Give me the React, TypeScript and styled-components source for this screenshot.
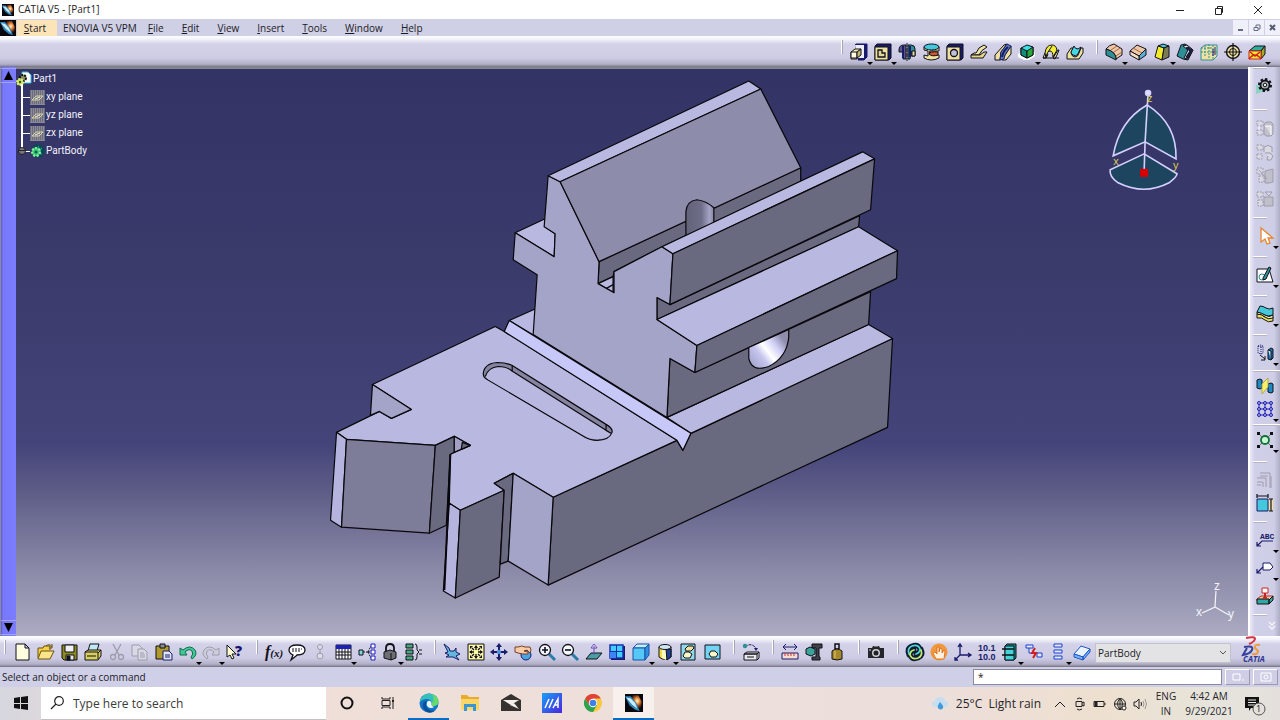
import React from "react";
import styled, { createGlobalStyle } from "styled-components";

const GlobalStyle = createGlobalStyle`
  *, *::before, *::after { box-sizing: border-box; }
  body { margin: 0; font-family: "Open Sans", "Noto Sans", sans-serif; color: #1c1c24; }
  button, input, select { font: inherit; color: inherit; margin: 0; }
  svg { display: block; }
`;

const App = styled.div`
  display: flex;
  flex-direction: column;
  height: 100vh;
  overflow: hidden;
  background: #cfcfe6;
`;

/* ---------- window chrome ---------- */

const TitleBar = styled.header`
  display: flex;
  align-items: center;
  height: 19px;
  flex: none;
  padding: 0 12px 0 2px;
  gap: 4px;
  background: #fff;
`;
const Title = styled.h1`
  flex: 1;
  margin: 0;
  font-size: 10px;
  font-weight: 400;
  line-height: 19px;
`;
const WindowButtons = styled.div`
  display: flex;
  gap: 18px;
`;
const WindowButton = styled.button`
  width: 21px;
  height: 18px;
  padding: 0;
  border: 0;
  background: none;
  display: grid;
  place-items: center;
`;
const MenuBar = styled.nav`
  display: flex;
  align-items: center;
  height: 17px;
  flex: none;
  background: #cfcfe6;
`;
const MenuItem = styled.button<{ $active?: boolean }>`
  height: 16px;
  padding: 0 9px;
  border: 0;
  background: ${(p) => (p.$active ? "#fde3b8" : "none")};
  font-size: 10px;
  line-height: 16px;
  white-space: nowrap;
`;
const MenuStart = styled(MenuItem)`
  width: 40px;
  padding: 0 8px 0 4px;
  margin-left: 1px;
`;
const MenuEnovia = styled(MenuItem)`
  padding: 0 2px 0 6px;
`;
const ChildButtons = styled.div`
  display: flex;
  gap: 1px;
  margin-left: auto;
`;
const ChildButton = styled.button`
  width: 15px;
  height: 15px;
  padding: 0;
  border: 0;
  background: #f0f0fa;
  display: grid;
  place-items: center;
`;

/* ---------- toolbars ---------- */

const ToolBar = styled.div<{ $end?: boolean }>`
  display: flex;
  align-items: stretch;
  justify-content: ${(p) => (p.$end ? "flex-end" : "flex-start")};
  height: 31px;
  flex: none;
  padding: 0 2px 0 4px;
  background: linear-gradient(#ffffff 0, #f4f4fc 3px, #d3d2e9 8px, #cdcce4 22px, #b2b1c8 28px, #8f8ea0 30px, #6a6a78 31px);
`;
const Section = styled.div<{ $width: number }>`
  position: relative;
  display: flex;
  align-items: center;
  justify-content: space-between;
  flex: none;
  width: ${(p) => p.$width}px;
  padding: 1px 12px 0 9px;
  &::before {
    content: "";
    position: absolute;
    left: 0;
    top: 4px;
    width: 2px;
    height: 14px;
    background: #fff;
    border-right: 1px solid #a5a4b8;
  }
`;
const Tool = styled.button`
  position: relative;
  width: 18px;
  height: 18px;
  flex: none;
  padding: 0;
  border: 0;
  background: none;
  svg { overflow: visible; }
`;
const Drop = styled.i`
  position: absolute;
  right: -5px;
  bottom: -4px;
  border: 3px solid transparent;
  border-top-color: #000;
  border-bottom: 0;
`;
const BodySelect = styled.select`
  width: 136px;
  height: 20px;
  margin: 7px 8px 0 -8px;
  padding: 0 0 0 2px;
  border: 1px solid #c2c2cc;
  border-radius: 0;
  background: #e3e3e6;
  font-size: 10px;
  appearance: none;
`;
const SelectWrap = styled.div`
  position: relative;
  svg { position: absolute; right: 12px; top: 14px; pointer-events: none; }
`;

const Main = styled.main`
  display: flex;
  flex: 1;
  min-height: 0;
`;
const ScrollStrip = styled.div`
  display: flex;
  flex-direction: column;
  justify-content: space-between;
  width: 16px;
  flex: none;
  padding: 1px 0;
  border-left: 1px solid #8b8ba0;
  background: linear-gradient(90deg, #5a5ac8, #7878fc 2px, #7c7cff);
`;
const ScrollButton = styled.button`
  width: 15px;
  height: 15px;
  padding: 0;
  border: 0;
  border-top: 1px solid #a2a2ff;
  border-bottom: 1px solid #a2a2ff;
  background: none;
  display: grid;
  place-items: center;
`;
const Viewport = styled.section`
  position: relative;
  flex: 1;
  border-top: 2px solid #85848f;
  background: linear-gradient(#333366 0, #3a3a6b 35%, #44447a 66%, #5c5b86 74%, #8685a4 87%, #acabc2 100%);
`;
const ModelLayer = styled.svg`
  position: absolute;
  inset: 0;
  width: 100%;
  height: 100%;
`;
const Tree = styled.ul`
  position: absolute;
  left: 0;
  top: 1px;
  margin: 0;
  padding: 0;
  list-style: none;
  color: #f2f2fa;
  font-family: Roboto, "Open Sans", sans-serif;
  font-size: 10px;
  line-height: 18px;
`;
const Branch = styled.ul`
  position: relative;
  margin: 0;
  padding: 0 0 0 14px;
  list-style: none;
  &::before {
    content: "";
    position: absolute;
    left: 5px;
    top: -4px;
    bottom: 9px;
    width: 2px;
    background: #fff;
  }
`;
const Node = styled.div`
  display: flex;
  align-items: center;
  height: 18px;
  gap: 1px;
`;
const Leaf = styled.li`
  position: relative;
  &::before {
    content: "";
    position: absolute;
    left: -8px;
    top: 9px;
    width: 8px;
    height: 1px;
    background: #fff;
  }
`;
const Expander = styled.button`
  position: absolute;
  left: -12px;
  top: 5px;
  width: 8px;
  height: 8px;
  padding: 0;
  border: 1px solid #222;
  border-radius: 50%;
  background: linear-gradient(#77777f 2px, #222 2px, #222 3px, #77777f 3px);
`;

const SideBar = styled.aside`
  display: flex;
  flex-direction: column;
  width: 32px;
  flex: none;
  border-left: 2px solid #fff;
  background: linear-gradient(90deg, #e9e9f8, #d0cfe8 5px, #cfcee7 24px, #aeadc6);
`;
const SideSection = styled.div<{ $height: number; $wide?: boolean }>`
  position: relative;
  display: flex;
  flex-direction: column;
  align-items: center;
  justify-content: space-between;
  flex: none;
  height: ${(p) => p.$height}px;
  padding: ${(p) => (p.$wide ? "7px 0 6px" : "10px 0 9px")};
  &::before {
    content: "";
    position: absolute;
    left: 3px;
    top: 0;
    width: ${(p) => (p.$wide ? 27 : 14)}px;
    height: 2px;
    background: #fff;
    border-bottom: 1px solid #b4b3c9;
  }
`;
const SideMore = styled(SideSection)`
  align-items: flex-end;
  padding: 2px 0 0;
`;

/* ---------- status line ---------- */

const StatusBar = styled.div`
  display: flex;
  align-items: center;
  height: 20px;
  flex: none;
  padding: 0 2px;
  background: #d0cfe8;
  font-size: 10px;
`;
const StatusText = styled.label`
  flex: 1;
`;
const PowerInput = styled.input`
  width: 249px;
  height: 16px;
  padding: 0 4px;
  border: 1px solid #8a8a9a;
  background: #fff;
  font-size: 10px;
`;
const StatusButton = styled.button`
  width: 25px;
  height: 16px;
  margin-left: 3px;
  padding: 0;
  border: 1px solid #9a99ae;
  border-top-color: #fff;
  border-left-color: #fff;
  background: #cfcee6;
  display: grid;
  place-items: center;
`;

/* ---------- taskbar ---------- */

const TaskBar = styled.footer`
  display: flex;
  align-items: stretch;
  height: 33px;
  flex: none;
  background: linear-gradient(90deg, #d6d6de 0, #dcd8dc 40px, #f0dfd9 330px, #eddfda 55%, #ecdedb 72%, #eee0cf 86%, #e6e4dc 95%, #e4dfdc 100%);
`;
const TaskButton = styled.button<{ $active?: boolean; $running?: boolean }>`
  width: 41px;
  padding: 0;
  border: 0;
  border-bottom: 2px solid ${(p) => (p.$running ? "#0a6cc4" : "transparent")};
  background: ${(p) => (p.$active ? "#f7f0ed" : "none")};
  display: grid;
  place-items: center;
`;
const SearchBox = styled.label`
  display: flex;
  align-items: center;
  gap: 9px;
  width: 285px;
  padding-left: 9px;
  border-bottom: 1px solid #c8c0c0;
  background: #fff;
`;
const SearchInput = styled.input`
  flex: 1;
  min-width: 0;
  padding: 0;
  border: 0;
  outline: 0;
  background: none;
  font-size: 12px;
  &::placeholder { color: #3b3b3b; opacity: 1; }
`;
const Tray = styled.div`
  display: flex;
  align-items: center;
  margin-left: auto;
  color: #26262b;
`;
const Weather = styled.button`
  display: flex;
  align-items: center;
  gap: 8px;
  padding: 0;
  margin-right: 9px;
  border: 0;
  background: none;
  font-size: 12px;
  white-space: pre;
`;
const TrayIcon = styled.button`
  width: 20px;
  height: 20px;
  padding: 0;
  border: 0;
  background: none;
  display: grid;
  place-items: center;
`;
const TrayText = styled.div<{ $width: number }>`
  width: ${(p) => p.$width}px;
  font-size: 10px;
  line-height: 15px;
  text-align: center;
  white-space: nowrap;
`;
const Notice = styled(TrayIcon)`
  width: 36px;
  margin-right: 8px;
`;

/* ---------- icons, drawn on an 18 unit grid ---------- */

const K = "#111118";
const N = "#1a1a6a";
const T = "#2f8f96";
const Y = "#efe2a0";
const G = "#9c9cab";

const icons: Record<string, React.ReactNode> = {
  pad: <g><path d="M5 2l1-1h11v13l-3 3H8" fill={N} stroke={N} /><path d="M5 2h9v13H8z" fill="#eeeef6" /><path d="M1 9l4-3h6l-4 3v7H1z" fill="#f7eeb4" stroke={K} /><path d="M1 9h6v6H1z" fill="#fffbe0" stroke={K} /><path d="M7 9l4-3v6l-4 3z" fill="#c7b870" stroke={K} /></g>,
  pocket: <g><path d="M1 3l2-2h14v14l-2 2H1z" fill={N} stroke={K} /><path d="M1 4h13v13H1z" fill={Y} stroke={K} /><path d="M4 7h4v3h3v4H4z" fill="#e0d69a" stroke={K} strokeWidth="1.3" /></g>,
  shaft: <g><path d="M1 7q0-5 5-5h2v14H5V9H1z" fill="#5a568c" stroke={K} /><path d="M10 2h3q4 0 4 4v7h-4V8l-1 8h-2z" fill={T} stroke={K} /><path d="M14 8h3v5h-3z" fill={Y} stroke={K} /><path d="M9 0v18" stroke={K} strokeDasharray="4 1" /><path d="M5 3v12M12 3v11" stroke={N} strokeWidth="2" /></g>,
  groove: <g stroke={K}><path d="M2 4v3l4 1v5l-4-1v3q7 4 15 0v-3H9q-3-2-1-4h9V4z" fill={Y} /><path d="M7 11q1-3 9-2v3q-6 2-9-1z" fill="#d4572e" /><ellipse cx="9.500" cy="4" rx="7.500" ry="3" fill="#45c7dc" /></g>,
  hole: <g><path d="M1 3l2-2h14v14l-2 2H1z" fill={N} stroke={K} /><path d="M1 4h13v13H1z" fill={Y} stroke={K} /><circle cx="8" cy="10" r="3.500" fill="#c2c0dc" stroke={K} strokeWidth="1.300" /></g>,
  rib: <g stroke={K}><path d="M1 12l3-2h2q2-6 8-8l3 2q-6 3-8 8H6z" fill={Y} /><path d="M1 12h9l4-3h3l-4 6H1z" fill="#e3d488" /></g>,
  slot: <g><path d="M1 12L10 2l3-1-6 8-1 8H1z" fill={Y} stroke={K} /><path d="M11 12l6-9v8l-5 6H8z" fill={Y} stroke={K} /><path d="M7 9l6-8 4 2-6 9-1 4-4 1z" fill="#5c7fb0" stroke={N} /><path d="M8 14q1-6 6-10" stroke={N} fill="none" strokeWidth="2" /></g>,
  stiffener: <g><path d="M0 11l4-3 9 3 4-2v4l-6 4H6l-6-3z" fill="#fff" /><path d="M3 5l6-3 6 2v8l-6 3-6-3z" fill="#3adfe4" stroke={K} /><path d="M3 5l6 3v7l-6-3z" fill="#0d8f7a" stroke={K} /><path d="M9 8l6-4v8l-6 3z" fill="#29a83c" stroke={K} /></g>,
  multi: <g stroke={K}><path d="M1 15l2-5 3 1q-1 3-2 4zM11 15l5-8h1l-2 5-2 4z" fill={Y} /><path d="M3 10q1-8 7-8 4 0 5 5l-4 7q0-6-3-6T4 15z" fill="#f4ee38" /><path d="M1 15h16M6 9l4-6" fill="none" /></g>,
  removed: <g stroke={K}><path d="M1 16v-5l4-6h2l-2 5q1 4 4 4t4-4l2-5h2v5l-4 6z" fill={Y} /><path d="M5 9l3-6q1 3 4 3l3-2-3 7q-2 3-5 1-2-1-2-3z" fill="#45d7e4" /></g>,
  fillet: <g stroke={K}><path d="M1 6q3-4 8-5l8 5v6l-6 4Q11 9 1 6z" fill="#efc7a6" /><path d="M1 6v6l10 5Q12 9 1 6z" fill={T} /><path d="M11 13l6-4M9 9l6-4M6 7l6-4" fill="none" stroke="#9a6a48" /></g>,
  chamfer: <g stroke={K}><path d="M1 8l7-6 9 4-7 7z" fill="#efc7a6" /><path d="M10 13l7-7v6l-7 5z" fill="#5ab0d8" /><path d="M1 8l9 5v4l-9-5z" fill="#f6dcc4" /><path d="M4 5l9 5" stroke="#9a6a48" /></g>,
  draft: <g stroke={K}><path d="M5 3l5-2 6 2-5 2z" fill="#45c7dc" /><path d="M5 3l6 2-2 12-7-3z" fill="#f2ea29" /><path d="M11 5l5-2v11l-7 3z" fill="#7c7b54" /></g>,
  shell: <g stroke={K}><path d="M1 13L5 2l4-1 8 6-5 10-5-1z" fill={T} /><path d="M7 3l5 4-4 8 4 1 5-9-6-5z" fill="#dfe6f2" /><path d="M10 5l4 3-4 6 2 1 4-8-4-3z" fill={N} /></g>,
  thick: <g stroke={T}><path d="M1 5l4-3h12v11l-4 4H1z" fill={Y} /><path d="M5 2v11M9 1v14M13 2v15M1 9h16M1 5h12" strokeDasharray="2 1" /><path d="M13 6v7M15 4v8" stroke={N} /></g>,
  thread: <g stroke={K} fill="none"><circle cx="9" cy="9" r="6.500" fill={Y} strokeWidth="1.400" /><circle cx="9" cy="9" r="3.500" /><path d="M9 0v18M0 9h18" strokeWidth="1.200" /></g>,
  replace: <g stroke={K}><path d="M1 8l6-5h10l-4 5z" fill="#2fae9a" /><path d="M13 8l4-5v8l-4 5z" fill="#a9a52a" /><path d="M1 8h12v8H1z" fill="#f2ea29" stroke="#c22" /><path d="M1 16q6-8 12 0M2 9l5 4 5-4" stroke="#d41f1f" strokeWidth="1.500" fill="none" /></g>,

  gear: <g><path d="M0 8v9l12-4 5-4z" fill="#8fd1c2" /><circle cx="9" cy="8" r="6" fill="none" stroke={K} strokeWidth="2" strokeDasharray="2.400 2.200" /><circle cx="9" cy="8" r="4.500" fill="#b5b5bc" stroke={K} strokeWidth="1.800" /><circle cx="9" cy="8" r="1.800" fill="#e5e5ec" stroke={K} /></g>,
  bool1: <g stroke={G} fill="#d9d9e4"><path d="M1 2h6v5H1zM1 11h6v5H1z" strokeDasharray="2 1" /><path d="M8 5l2-2h5l2 2v10l-2 2h-5l-2-2z" fill="#c0c0ca" /><path d="M9 7h6v9M3 7v4" stroke="#fff" /></g>,
  bool2: <g stroke={G} fill="#d9d9e4"><path d="M1 2h6v5H1zM1 11h5v5H1z" strokeDasharray="2 1" /><path d="M8 9V4q4-3 8 0v5M9 10l5 0 3 3-2 4h-4l1-4" /></g>,
  bool3: <g stroke={G} fill="#d9d9e4"><path d="M1 2h6v6H1zM3 10h5v6H3z" strokeDasharray="2 1" /><path d="M9 5l8-2v13l-4 1H9z" fill="#c0c0ca" /><path d="M3 4l8 9" /></g>,
  bool4: <g stroke={G} fill="#d9d9e4"><path d="M1 2h6v5H1zM2 10h5v6H2z" strokeDasharray="2 1" /><path d="M8 7h9v9H8z" fill="#c0c0ca" /><path d="M9 2h7l-3 4z" /></g>,
  arrow: <path d="M5 1v14l4-3 2 5 3-1-2-5h5z" fill="#fff" stroke="#e8872e" strokeWidth="1.300" />,
  sketch: <g><path d="M1 3h12l4 13H1z" fill="#fff" stroke={K} /><circle cx="6" cy="11" r="3" fill="none" stroke={T} /><path d="M7 12l6-11 2 1-5 11-3 1z" fill={T} stroke={K} /></g>,
  surface: <g stroke={K}><path d="M1 9q5 0 8 3t8 0v4q-5 2-8-1t-8-2z" fill="#efe05a" /><path d="M1 7q4 0 8 3t8 0v3q-5 2-8-1T1 9z" fill="#fbf5b8" /><path d="M1 7l3-6q3 0 6 2t7 0v7q-5 2-8 0T1 7z" fill="#45c7dc" /></g>,
  transform: <g><path d="M2 2l3-1 2 1v7l-2 1-3-1zM2 2l3 1 2-1M5 3v7" fill="none" stroke={N} strokeDasharray="1 1" /><path d="M12 6l3-2 2 1v9l-2 2-3-1z" fill="#1c71b8" stroke={K} /><path d="M12 6l3 1v8" fill="#bfe6f5" stroke={K} /><path d="M4 11l5 4M9 12v4H5" fill="none" stroke={K} /></g>,
  mirror: <g stroke={K}><path d="M1 3l3-1 2 1v8l-2 1-3-1zM12 7l3-1 2 1v8l-2 1-3-1z" fill="#1d8ac4" /><path d="M6 7l6-6v9l-6 7z" fill="#f7f06a" stroke="#b0a64a" /></g>,
  pattern: <g stroke="#1d1db0" fill="#a9a9f5"><path d="M3 3h12v12H3zM9 3v12M3 9h12" fill="none" />{[3, 9, 15].map((x) => [3, 9, 15].map((y) => <circle key={`${x}-${y}`} cx={x} cy={y} r="1.500" />))}</g>,
  scale: <g stroke={K}><path d="M3 3l3 3M15 3l-3 3M3 15l3-3M15 15l-3-3" stroke="#777" /><path d="M1 1h3v3H1zM14 1h3v3h-3zM1 14h3v3H1zM14 14h3v3h-3z" fill={K} stroke="none" /><circle cx="9" cy="9" r="4" fill="#c8f9d2" stroke="#12713b" strokeWidth="1.800" /></g>,
  dimOff: <g stroke={G} fill="none"><path d="M1 7h9v9M1 11h6v5M1 14h4M4 2h10v15M4 5h8M15 5v12" /></g>,
  dim: <g><path d="M1 5h11v12H1z" fill="#45c7dc" stroke={N} /><path d="M13 5h4v12h-4z" fill={Y} /><path d="M1 2h11M1 0v4M12 0v4M15 5v12M13 5h4M13 17h4" stroke={K} strokeWidth="1.200" /></g>,
  abc: <g><text x="4" y="8" fontSize="8" fontWeight="700" fontFamily="Liberation Mono, monospace" fill={N}>ABC</text><path d="M17 10H6l-5 5M1 11v4h4" fill="none" stroke={N} strokeWidth="1.200" /></g>,
  tag: <g stroke={N} fill="none"><path d="M7 4h7l3 4-3 3H7z" fill="#fff" /><path d="M7 8l-6 6M1 10v4h4" strokeWidth="1.200" /></g>,
  stamp: <g><path d="M1 12l4-3h12l-4 5H1z" fill="#f0c89c" stroke="#c92222" /><path d="M1 12h12v5H1zM13 13l4-4v4l-4 4z" fill="#2fa7a3" stroke={K} /><path d="M6 1h6v5H6z" fill="#fff" stroke="#c92222" /><path d="M9 6v4M7 11h4" stroke="#c92222" strokeWidth="2" /></g>,
  more: <path d="M7 6l3 3 3-3M7 10l3 3 3-3" fill="none" stroke="#f5f5fb" strokeWidth="1.300" />,

  newDoc: <path d="M3 1h9l4 4v12H3zM12 1v4h4" fill="#fffde0" stroke={K} />,
  open: <g stroke="#6a5208"><path d="M1 15V5h5l1-2h6v4" fill="#f4d04b" /><path d="M1 16L4 8h13l-4 8z" fill="#fbe58a" /><path d="M9 3q4-3 6 1M15 1v4h-3" fill="none" /></g>,
  save: <g stroke={K}><path d="M2 2h15v15H4l-2-2z" fill="#8e8c1c" /><path d="M5 2h9v7H5z" fill="#eef0f4" /><path d="M6 12h8v5H6z" fill="#e9e9f2" /><path d="M7 13h3v4H7z" fill={K} /></g>,
  print: <g stroke={K}><path d="M6 1h9l-2 7H4z" fill="#bfe9f5" /><path d="M1 9l3-2h13v6l-3 4H1z" fill="#d9cf5e" /><path d="M1 9h13v7M14 10l3-3M3 13h9" fill="none" /></g>,
  cut: <g stroke={G} fill="none" strokeWidth="1.300"><path d="M5 1l6 11M13 1L7 12" /><circle cx="5" cy="14" r="2.500" /><circle cx="13" cy="14" r="2.500" /></g>,
  copy: <g stroke={G} fill="#d9d9e6"><path d="M1 2h7l3 3v8H1z" /><path d="M7 6h6l3 3v8H7zM9 10h4M9 12h5M9 14h5" /></g>,
  paste: <g stroke={K}><path d="M1 3h13v13H1z" fill="#b09a2c" /><path d="M5 1h5v4H5z" fill="#8d8d96" /><path d="M8 8h6l3 3v6H8z" fill="#dfe7fa" stroke={N} /><path d="M10 12h5M10 14h5" stroke={N} /></g>,
  undo: <path d="M1 5v7h7l-2-3q4-4 7-1 2 3-1 6l1 2q6-4 3-9Q11 1 4 7z" fill="#3fc997" stroke="#0f6b4a" />,
  redo: <path d="M17 5v7h-7l2-3q-4-4-7-1-2 3 1 6l-1 2Q-1 12 2 7q5-6 12 0z" fill="#cfcfdc" stroke={G} />,
  help: <g><path d="M1 2v12l3-2 2 4 2-1-2-4h4z" fill="#fffbd0" stroke={K} /><text x="9" y="13" fontSize="14" fontWeight="800" fill="#14146e">?</text></g>,
  fx: <text x="0" y="14" fontSize="16" fontStyle="italic" fontWeight="700" fontFamily="Liberation Serif, serif" fill={K}>f<tspan fontSize="11">(x)</tspan></text>,
  comment: <g><path d="M9 2q8 0 8 5t-8 5l-1 1-5 4 2-5Q1 10 1 7q0-5 8-5z" fill="#fff" stroke={K} strokeWidth="1.300" /><path d="M4 6h10M4 8h9" stroke={K} strokeDasharray="2 1" /></g>,
  chain: <g stroke={G} fill="#dcdce8"><circle cx="9" cy="4" r="2.500" /><circle cx="9" cy="13" r="3" /><path d="M9 6v5" /></g>,
  table: <g><path d="M2 2h15v14H2z" fill="#fff" stroke={K} /><path d="M2 2h15v4H2z" fill="#1c22b4" /><path d="M2 9h15M2 12h15M5 6v10M8 6v10M11 6v10M14 6v10" stroke={K} /></g>,
  graph: <g stroke="#1d1dc0" fill="#fff"><path d="M5 9h5M10 9l3-6M10 9l3 6M10 9h4" stroke={K} strokeDasharray="2 1" /><path d="M1 7h4v5H1z" fill="#7fd6e0" stroke={K} /><path d="M13 1h4v4h-4zM13 7h4v4h-4zM13 13h4v4h-4z" /></g>,
  lock: <g stroke={K}><path d="M5 9V5q0-4 4-4t4 4v3" fill="none" strokeWidth="1.800" /><path d="M3 9l6-2 6 2v6l-5 2-7-2z" fill="#6d6d72" /><path d="M10 10v7" /></g>,
  rules: <g><path d="M2 1h7v4H2zM2 7h7v4H2zM2 13h7v4H2z" fill="#46a87c" stroke={K} /><path d="M11 1q2 0 2 3v3l2 2-2 2v3q0 3-2 3M15 7h3M15 11h3" fill="none" stroke={K} /></g>,
  fly: <path d="M1 1l5 4 1 3 4 0 2-3v4l4 2-4 2 3 4-6-3H3l3-2-4-2 3-1z" fill="#62b7dc" stroke={N} />,
  fit: <g><path d="M1 1h16v16H1z" fill="#fbf7a8" stroke={K} /><path d="M9 3v4M9 11v4M3 9h4M11 9h4M5 5l2 2M13 5l-2 2M5 13l2-2M13 13l-2-2" stroke={K} strokeWidth="1.300" /><path d="M9 2L7 5h4zM9 16l-2-3h4zM2 9l3-2v4zM16 9l-3-2v4zM3 3h3L3 6zM15 3h-3l3 3zM3 15h3l-3-3zM15 15h-3l3-3z" fill={K} /></g>,
  pan: <g><path d="M9 2v14M2 9h14" stroke={N} strokeWidth="2" /><path d="M9 0L6 4h6zM9 18l-3-4h6zM0 9l4-3v6zM18 9l-4-3v6z" fill={N} /><circle cx="9" cy="9" r="2.200" fill="#4b8fe0" /></g>,
  rotate: <g stroke={K}><circle cx="12" cy="12" r="5" fill="#4aa5e6" stroke={N} /><path d="M1 4h3q4-2 7 0l5 0 1 3-1 3-3-3-3 1 4 1 0 2-5 0-5-1-3-1z" fill="#f6cda6" stroke="#7a3d24" /></g>,
  zoomIn: <g><path d="M11 11l6 6" stroke="#2c7aa8" strokeWidth="3" /><circle cx="7" cy="7" r="5.500" fill="#f3f8fc" stroke={K} strokeWidth="1.300" /><path d="M4 7h6M7 4v6" stroke={K} strokeWidth="1.600" /></g>,
  zoomOut: <g><path d="M11 11l6 6" stroke="#2c7aa8" strokeWidth="3" /><circle cx="7" cy="7" r="5.500" fill="#f3f8fc" stroke={K} strokeWidth="1.300" /><path d="M4 7h6" stroke={K} strokeWidth="1.600" /></g>,
  normal: <g><path d="M1 16l5-6h11l-5 6z" fill="#4a9fa5" stroke={K} /><path d="M9 12V3M6 5l3-4 3 4z" stroke="#6a4bb8" fill="#fff" /></g>,
  multiView: <g><path d="M3 3h14v14H3z" fill={N} /><path d="M2 2h13v13H2z" fill="#3fd0fa" stroke="#1a2fb0" strokeWidth="1.500" /><path d="M2 9h6v6H2z" fill="#3d84f4" /><path d="M8.500 2v13M2 8.500h13" stroke="#1a2fb0" /></g>,
  iso: <g stroke="#1b4ea8"><path d="M1 5l4-4h12l-4 4z" fill="#bff0fb" /><path d="M1 5h12v12H1z" fill="#55c8f5" /><path d="M13 5l4-4v11l-4 5z" fill="#2f90de" /></g>,
  shade: <g stroke={K}><path d="M3 4v10q6 5 12 0V4z" fill="#f1df4a" /><path d="M6 5h4v12l-4-2z" fill="#fffbc0" stroke="none" /><path d="M10 6h5v8l-4 3z" fill="#1d3f9c" /><ellipse cx="9" cy="4" rx="6" ry="2.500" fill="#cfe6f0" /></g>,
  hide: <g><path d="M2 1h14v16H2z" fill="#8fd9ec" stroke={K} /><path d="M6 6l3-3h5l1 2-3 3H7z" fill="#efe39c" stroke={K} /><path d="M4 13l2-4h4l3 2-2 4H6z" fill="#fff6c8" stroke={K} /></g>,
  swap: <g><path d="M2 2h15v14H2z" fill="#72d3f2" stroke={K} /><path d="M6 11l2-3h4l3 3-2 3H8z" fill="#fff6c8" stroke={K} /></g>,
  catalog: <g><path d="M3 4q6-5 11 1" stroke={N} fill="none" strokeDasharray="3 1" /><circle cx="3" cy="3" r="2.200" fill={T} /><path d="M12 5h4l-2 3z" fill={N} /><path d="M2 11l3-2h12l-2 2zM2 11h13v6H2zM15 11l2-2v6l-2 2" fill="#e9e9ee" stroke={K} /><path d="M5 14h7" stroke={K} /></g>,
  measure: <g><path d="M2 4h14M5 1L2 4l3 3M13 1l3 3-3 3" fill="none" stroke={N} /><path d="M1 10h16v6H1z" fill="#f5dcd0" stroke={N} /><path d="M4 10v3M7 10v3M10 10v3M13 10v3" stroke="#c33" /></g>,
  caliper: <g><path d="M7 1h10v4h-3v9h1v3H7v-3h4V5H7z" fill="#3f4147" stroke={K} /><path d="M1 6l4-2 5 2v5l-4 2-5-2z" fill="#3ba39c" stroke={K} /></g>,
  mass: <g stroke={K}><path d="M7 1h4v5H7z" fill="none" strokeWidth="1.500" /><path d="M4 8q5-4 10 0v8q-5 2-10 0z" fill="#a5882a" /><path d="M7 8v7" stroke="#e3cc70" /></g>,
  camera: <g><path d="M1 5h4l1-2h6l1 2h4v10H1z" fill="#25252a" /><circle cx="9" cy="10" r="4" fill="#cfcfd8" /><circle cx="9" cy="10" r="2.500" fill="#222" /><path d="M7 3h4M2 7h2" stroke="#ccc" /></g>,
  update: <g fill="none" strokeLinecap="round"><path d="M3 12q-3-7 3-9 6-2 8 3 0 4-4 5M15 6q3 6-3 9-6 2-8-3 0-4 4-5" stroke="#0f1c38" strokeWidth="5" /><path d="M3 11q-2-6 3-8 6-2 8 3 0 4-4 5" stroke="#4fd6cf" strokeWidth="1.800" /><path d="M15 7q2 6-3 8-6 2-8-3 0-4 4-5" stroke="#c4e86a" strokeWidth="1.800" /></g>,
  manual: <g><circle cx="9" cy="9" r="8.500" fill="#f2973b" /><path d="M6 16l-3-6 2-1 2 2V4l2 0v5l1-4 2 1v4l2-3 1 1-1 8z" fill="#fff1dd" stroke="#d8660e" strokeWidth=".8" /></g>,
  axes: <g stroke={N} fill="none" strokeWidth="1.300"><path d="M6 12V1M4 4l2-3 2 3M6 12h11M14 10l3 2-3 2M6 12l-5 5M1 14v3h3" /></g>,
  mean: <g fontSize="9" fontWeight="700" fontFamily="Liberation Sans, sans-serif" fill={N}><text x="0" y="8">10.1</text><text x="0" y="17">10.0</text></g>,
  body: <g stroke={K}><path d="M4 3l2-2h9v14l-2 2H4z" fill="#198b86" /><path d="M4 3h9v14H4z" fill="#42d4d8" /><path d="M1 6h12M1 12h12" strokeWidth="1.300" /></g>,
  broken: <g fill="none" stroke="#1d3fd0"><path d="M1 2h7v3H1zM4 5v5h4M12 10h5v4h-5z" fill="#e4ecff" /><path d="M10 5l-3 5h4l-3 5" stroke="#d41c1c" strokeWidth="2" /></g>,
  stack: <g fill="#e4ecff" stroke="#1d3fd0"><path d="M5 1h8v3H5zM5 7h8v3H5zM5 13h8v3H5z" /></g>,
  plate: <g stroke="#1d54c8"><path d="M1 11l7-8 9 3-7 8z" fill="#e9f3ff" /><path d="M1 11l9 3v3l-9-3zM10 14l7-8v3l-7 8z" fill="#7ab9f2" /></g>,
};

const Icon = ({ name }: { name: string }) => (
  <svg width="18" height="18" viewBox="0 0 18 18" aria-hidden="true">{icons[name]}</svg>
);

/* A trailing "+" marks a tool that opens a flyout. */
const Tools = ({ names }: { names: string }) => (
  <>
    {names.split(" ").map((n) => {
      const name = n.replace("+", "");
      return (
        <Tool key={n} type="button" aria-label={name}>
          <Icon name={name} />
          {n.endsWith("+") && <Drop />}
        </Tool>
      );
    })}
  </>
);

const CatiaMark = ({ size }: { size: number }) => (
  <svg width={size} height={size} viewBox="0 0 16 16" aria-hidden="true">
    <defs>
      <radialGradient id="glow" cx=".62" cy=".4" r=".55">
        <stop offset="0" stopColor="#fff6e8" /><stop offset=".3" stopColor="#f5a04c" />
        <stop offset=".7" stopColor="#7a3312" /><stop offset="1" stopColor="#0a0a12" />
      </radialGradient>
    </defs>
    <rect width="16" height="16" fill="#07070d" />
    <path d="M4 1h8l3 6-1 6-4 1z" fill="url(#glow)" />
    <path d="M0 2h5l5 6 3 7-4-1-5-4z" fill="#2f86b8" />
    <path d="M1 3l4 1 4 4 2 5-5-4z" fill="#cdeefa" />
  </svg>
);

const PlaneIcon = () => (
  <svg width="15" height="15" viewBox="0 0 15 15" aria-hidden="true">
    <rect width="15" height="15" fill="#8b8b98" />
    <path d="M0 1h15M0 3h15M0 5h15M0 7h15M0 9h15M0 11h15M0 13h15" stroke="#4d4d63" strokeDasharray="1 1" />
    <path d="M2 10l4-4h7l-4 4z" fill="none" stroke="#d9d7a0" />
    <path d="M5 9l5-2" stroke="#eee" />
  </svg>
);
const PartIcon = () => (
  <svg width="16" height="16" viewBox="0 0 16 16" aria-hidden="true">
    <path d="M6 1h6l3 3v8H6z" fill="#fff" stroke="#3bb5d8" />
    <circle cx="7" cy="7" r="3" fill="#8d9160" stroke="#111" strokeWidth="2" strokeDasharray="2 1" />
    <circle cx="4" cy="11" r="3" fill="#b8e04d" stroke="#d8ee80" strokeWidth="2" strokeDasharray="2 1" />
    <circle cx="4" cy="11" r="1" fill="#222" />
  </svg>
);
const BodyIcon = () => (
  <svg width="15" height="15" viewBox="0 0 15 15" aria-hidden="true">
    <circle cx="8" cy="7" r="5" fill="#1fb7a4" stroke="#0c4a52" strokeWidth="4" strokeDasharray="3 1" />
    <circle cx="6" cy="8" r="4" fill="#3ecb7a" stroke="#8ff0a0" strokeWidth="2" strokeDasharray="2 1.500" />
    <circle cx="6" cy="8" r="1.500" fill="#0f5f4a" />
  </svg>
);

/* ---------- the solid shown in the viewport ---------- */

const TOP = "#b9b8e1";
const FRONT = "#a4a3c8";
const DARK = "#69697f";

const faces: [string, string][] = [
  ["553,497 677,440 683,450 691,433 893,338 888,427 548,585", DARK],
  ["667,417 869,324 893,338 691,433", TOP],
  ["509,320 536,308 534,335", TOP],
  ["515,232 545,218 545,226 555,233 554,256", TOP],
  ["599,261 801,167 801,181 662,246 614,271 613,276 598,283", DARK],
  ["598,283 613,276 613,292", TOP],
  ["670,358 695,372 871,291 869,324 667,417", DARK],
  ["657,297 670,304 860,215 859,226 657,319", DARK],
  ["548,175 560,181 599,261 598,283 614,292 614,271 662,246 673,253 670,304 657,297 657,319 697,345 695,372 670,358 667,417 533,334 537,274 513,259 515,232 554,256 555,233 544,226", FRONT],
  ["548,175 749,80 761,88 560,181", TOP],
  ["560,181 761,88 801,167 599,261", "#8d8cab"],
  ["495,326 504,331 677,440 553,497 513,473 494,483 504,490 460,510 449,503 450,454 470,445 454,436 435,445 346,439 336,432 379,411 391,418 411,409 372,384", TOP],
  ["504,331 509,320 691,433 683,450 677,440", "#c7c7f8"],
  ["372,384 411,409 391,418 379,411 370,415", FRONT],
  ["336,432 346,439 341,527 330,520", "#b5b4de"],
  ["346,439 435,445 429,533 341,527", "#7d7c99"],
  ["435,445 454,436 454,452 450,454 446,525 429,533", DARK],
  ["454,436 470,445 454,452", "#a2a1c5"],
  ["462,442 470,445 461,449", DARK],
  ["449,503 460,510 455,598 443,591", "#b5b4de"],
  ["460,510 504,490 499,577 455,598", DARK],
  ["494,483 513,473 508,561 500,564 504,490", DARK],
  ["513,473 553,497 548,585 508,561", FRONT],
];
const railFaces: [string, string][] = [
  ["662,246 863,151 875,158 673,253", TOP],
  ["673,253 875,158 871,209 670,304", DARK],
  ["657,319 859,226 898,250 697,345", TOP],
  ["697,345 898,250 897,278 695,372", DARK],
];
const Faces = ({ list }: { list: [string, string][] }) => (
  <>{list.map(([points, fill]) => <polygon key={points} points={points} fill={fill} />)}</>
);

const Model = () => (
  <ModelLayer viewBox="16 68 1232 568" role="img" aria-label="Part1 solid">
    <defs>
      <linearGradient id="bore" x1=".1" y1=".9" x2=".9" y2=".3">
        <stop offset="0" stopColor="#a9a8d0" /><stop offset=".3" stopColor="#c6c5ee" />
        <stop offset=".5" stopColor="#ffffff" /><stop offset=".75" stopColor="#d0cff6" />
        <stop offset="1" stopColor="#8e8dab" />
      </linearGradient>
      <linearGradient id="notch">
        <stop offset="0" stopColor="#62627a" /><stop offset=".55" stopColor="#6f6e88" />
        <stop offset=".85" stopColor="#a5a4c6" /><stop offset="1" stopColor="#85849f" />
      </linearGradient>
    </defs>
    <g stroke="#08080c" strokeWidth="1.200" strokeLinejoin="round">
      <Faces list={faces} />
      <path d="M686 236V211q1-11 11-12 9 1 17 8v17z" fill="url(#notch)" />
      <Faces list={railFaces} />
      <path d="M749 347l40-18v8q-2 20-20 29-17 6-20-8z" fill="url(#bore)" />
      <path d="M483 373q1-10 14-11 9 0 15 3l94 59q7 4 6 8-3 8-15 8-7 0-12-3l-98-58q-4-2-4-6z" fill="#85849f" />
      <path d="M485 376q3-9 13-10 8 0 13 4l95 60 5 3q-3 6-14 6-7 0-12-3l-97-57z" fill={TOP} stroke="none" />
      <path d="M485 376q3-9 13-10 8 0 13 4l95 60 5 3M512 365v5M606 424v6M606 288l7-4" fill="none" />
      <path d="M450 454l-3 71-3 65" fill="none" strokeWidth="2" />
    </g>
    <g stroke="#d6d0ff" strokeWidth="1.600" fill="#1e4560">
      <path d="M1148 104q-28 16-34 51l32-14 31 17q1-35-29-54z" />
      <path d="M1145 153l-34 16q-1 7 8 13 26 13 51 0 8-6 8-9z" />
      <path d="M1149 92l-3 49-1 30" fill="none" />
      <circle cx="1149" cy="92" r="2.500" fill="#e4deff" />
    </g>
    <rect x="1141" y="168" width="8" height="8" fill="#d80000" />
    <g fill="#d9d052" fontSize="11" fontFamily="Liberation Sans, sans-serif">
      <text x="1148" y="101">z</text><text x="1114" y="164">x</text><text x="1174" y="168">y</text>
    </g>
    <path d="M1217 591l-1 16-13 6M1216 607l14 8" fill="none" stroke="#f4f4fa" strokeWidth="1.200" />
    <g fill="#f4f4fa" fontSize="12" fontFamily="Liberation Sans, sans-serif">
      <text x="1215" y="590">z</text><text x="1197" y="616">x</text><text x="1229" y="618">y</text>
    </g>
  </ModelLayer>
);

const menus = ["File", "Edit", "View", "Insert", "Tools", "Window", "Help"];
const MenuLabel = ({ text }: { text: string }) => <><u>{text[0]}</u>{text.slice(1)}</>;

const stroke = { fill: "none", stroke: "#222", strokeWidth: 1 };

export default function CatiaWindow() {
  return (
    <App>
      <GlobalStyle />
      <TitleBar>
        <CatiaMark size={12} />
        <Title>CATIA V5 - [Part1]</Title>
        <WindowButtons>
          <WindowButton aria-label="Minimize"><svg width="10" height="10" {...stroke}><path d="M1 5.500h8" /></svg></WindowButton>
          <WindowButton aria-label="Restore"><svg width="10" height="10" {...stroke}><path d="M1.500 3.500h6v6h-6zM3.500 3V1.500h5v6H7" /></svg></WindowButton>
          <WindowButton aria-label="Close"><svg width="10" height="10" {...stroke}><path d="M1 1l8 8M9 1L1 9" /></svg></WindowButton>
        </WindowButtons>
      </TitleBar>
      <MenuBar>
        <CatiaMark size={16} />
        <MenuStart $active><MenuLabel text="Start" /></MenuStart>
        <MenuEnovia>ENOVIA V5 VPM</MenuEnovia>
        {menus.map((m) => <MenuItem key={m}><MenuLabel text={m} /></MenuItem>)}
        <ChildButtons>
          <ChildButton aria-label="Minimize part"><svg width="8" height="8"><path d="M1 6h5" stroke="#666d80" strokeWidth="2" /></svg></ChildButton>
          <ChildButton aria-label="Restore part"><svg width="8" height="8" fill="none" stroke="#666d80"><path d="M1 3.500h4v3H1zM3 3V1h4v4H5" /></svg></ChildButton>
          <ChildButton aria-label="Close part"><svg width="8" height="8"><path d="M1 1l5 5M6 1L1 6" stroke="#555c70" strokeWidth="2" /></svg></ChildButton>
        </ChildButtons>
      </MenuBar>
      <ToolBar $end>
        <Section $width={255}><Tools names="pad+ pocket+ shaft groove hole rib slot stiffener+ multi removed" /></Section>
        <Section $width={182}><Tools names="fillet+ chamfer draft+ shell thick thread replace+" /></Section>
      </ToolBar>

      <Main>
        <ScrollStrip>
          <ScrollButton aria-label="Scroll up"><svg width="9" height="9"><path d="M4.500 0L9 9H0z" /></svg></ScrollButton>
          <ScrollButton aria-label="Scroll down"><svg width="9" height="9"><path d="M4.500 9L9 0H0z" /></svg></ScrollButton>
        </ScrollStrip>
        <Viewport>
          <Model />
          <Tree>
            <li>
              <Node><PartIcon />Part1</Node>
              <Branch>
                {["xy plane", "yz plane", "zx plane"].map((p) => (
                  <Leaf key={p}><Node><PlaneIcon />{p}</Node></Leaf>
                ))}
                <Leaf><Expander aria-label="Expand PartBody" /><Node><BodyIcon />PartBody</Node></Leaf>
              </Branch>
            </li>
          </Tree>
        </Viewport>
        <SideBar>
          <SideSection $height={42}><Tools names="gear" /></SideSection>
          <SideSection $height={108}><Tools names="bool1 bool2 bool3 bool4" /></SideSection>
          <SideSection $height={39}><Tools names="arrow+" /></SideSection>
          <SideSection $height={39}><Tools names="sketch+" /></SideSection>
          <SideSection $height={39}><Tools names="surface+" /></SideSection>
          <SideSection $height={36}><Tools names="transform+" /></SideSection>
          <SideSection $height={54} $wide><Tools names="mirror pattern+" /></SideSection>
          <SideSection $height={37} $wide><Tools names="scale+" /></SideSection>
          <SideSection $height={60}><Tools names="dimOff dim" /></SideSection>
          <SideSection $height={93}><Tools names="abc+ tag+ stamp" /></SideSection>
          <SideMore $height={22}><Tools names="more" /></SideMore>
        </SideBar>
      </Main>

      <ToolBar>
        <Section $width={252}><Tools names="newDoc open save print cut copy paste undo+ redo+ help" /></Section>
        <Section $width={178}><Tools names="fx comment chain table+ graph lock+ rules" /></Section>
        <Section $width={299}><Tools names="fly fit pan rotate zoomIn zoomOut normal multiView iso+ shade+ hide swap" /></Section>
        <Section $width={39}><Tools names="catalog" /></Section>
        <Section $width={86}><Tools names="measure caliper mass" /></Section>
        <Section $width={39}><Tools names="camera" /></Section>
        <Section $width={206}><Tools names="update manual axes mean body+ broken stack+ plate" /></Section>
        <SelectWrap>
          <BodySelect aria-label="In work object" defaultValue="PartBody"><option>PartBody</option></BodySelect>
          <svg width="8" height="6" fill="none" stroke="#555"><path d="M1 1l3 3 3-3" /></svg>
        </SelectWrap>
        <svg width="36" height="30" viewBox="0 0 36 30" role="img" aria-label="CATIA">
          <path d="M7 2q9-2 9 1-1 3-6 5" fill="none" stroke="#d8343f" strokeWidth="2" />
          <path d="M5 11q10-2 8 3-2 4-9 5l4-7" fill="none" stroke="#34409a" strokeWidth="2" />
          <path d="M21 9q-6-1-5 3l3 3q0 4-6 3" fill="none" stroke="#f09a3a" strokeWidth="2" />
          <text x="4" y="26" fontSize="8" fontWeight="700" fontStyle="italic" fontFamily="Open Sans, sans-serif" fill="#2c3590">CATIA</text>
        </svg>
      </ToolBar>

      <StatusBar>
        <StatusText htmlFor="power">Select an object or a command</StatusText>
        <PowerInput id="power" defaultValue="*" />
        <StatusButton aria-label="Catalog browser"><svg width="14" height="10" fill="none" stroke="#fff"><path d="M2 2h7v6H2zM11 8h2" /></svg></StatusButton>
        <StatusButton aria-label="Information"><svg width="14" height="10" fill="none" stroke="#fff"><path d="M2 9V1h10v8zM5 5a2 2 0 104 0 2 2 0 10-4 0" /></svg></StatusButton>
      </StatusBar>

      <TaskBar>
        <TaskButton aria-label="Start menu">
          <svg width="14" height="14" fill="#111"><path d="M0 2l6-1v6H0zM7 1l7-1v7H7zM0 8h6v5l-6-1zM7 8h7v6l-7-1z" /></svg>
        </TaskButton>
        <SearchBox>
          <svg width="14" height="14" fill="none" stroke="#222" strokeWidth="1.200"><circle cx="9" cy="5" r="4.300" /><path d="M6 8l-5 5" /></svg>
          <SearchInput placeholder="Type here to search" />
        </SearchBox>
        <TaskButton aria-label="Cortana"><svg width="14" height="14" fill="none" stroke="#111" strokeWidth="2"><circle cx="7" cy="7" r="5.500" /></svg></TaskButton>
        <TaskButton aria-label="Task view"><svg width="14" height="14" fill="none" stroke="#222"><path d="M1 1v2h8V1M1 4.500h8v5H1zM1 13v-2h8v2M12 1v3M12 6v7" /><path d="M11 5h2" strokeWidth="2" /></svg></TaskButton>
        <TaskButton $running aria-label="Edge">
          <svg width="20" height="20" viewBox="0 0 20 20">
            <circle cx="10" cy="10" r="9.500" fill="#1273c4" />
            <path d="M1 8Q4 0 11 .600q8 1 8.500 8.400-.5 4-5 4-3-.5-2-3 0-4-5-4-4 0-6.500 3z" fill="#35c1b9" />
            <path d="M13 1q7 3 6.500 8-.5 4-5 4-2 0-2-2 4-4 .5-10z" fill="#69d96a" />
            <path d="M8 8q-3 4 1 8 4 3 8 1-4 4-9 2-5-3-4-8 1-3 4-3z" fill="#0b4f9c" />
            <path d="M8 9q3-3 4.500 1-1 3 3 4-4 2-6.500 0Q7 12 8 9z" fill="#e9f4fa" />
          </svg>
        </TaskButton>
        <TaskButton aria-label="File Explorer">
          <svg width="20" height="18" viewBox="0 0 20 18"><path d="M1 1h6l2 2h10v13H1z" fill="#e9ab2f" /><path d="M1 5h18v11H1z" fill="#fbd667" /><path d="M4 17v-7h12v7h-3v-4H7v4z" fill="#3b94d4" /></svg>
        </TaskButton>
        <TaskButton aria-label="Mail">
          <svg width="20" height="17" viewBox="0 0 20 17"><path d="M0 6l10-6 10 6v11H0z" fill="#35322f" /><path d="M2 6h16l-8 5z" fill="#f6eeea" /><path d="M9 11l9 4-5-6z" fill="#f6eeea" /></svg>
        </TaskButton>
        <TaskButton aria-label="MyASUS">
          <svg width="20" height="20" viewBox="0 0 20 20"><defs><linearGradient id="asus" x2="1" y2="1"><stop stopColor="#19a0f5" /><stop offset="1" stopColor="#4b24e0" /></linearGradient></defs><rect width="20" height="20" fill="url(#asus)" /><path d="M3 15l4-9M7 15l4-9M11 15l5-9v9M12 12h4" stroke="#fff" strokeWidth="1.500" fill="none" /></svg>
        </TaskButton>
        <TaskButton aria-label="Chrome">
          <svg width="18" height="18" viewBox="0 0 18 18"><circle cx="9" cy="9" r="9" fill="#f8c93b" /><path d="M1.200 4.500A9 9 0 0116.800 4.500H9L5 11z" fill="#e04336" /><path d="M1.200 4.500A9 9 0 009 18l4-7-8 0z" fill="#2da24f" /><circle cx="9" cy="9" r="4.200" fill="#fff" /><circle cx="9" cy="9" r="3.300" fill="#3f7fea" /></svg>
        </TaskButton>
        <TaskButton $active $running aria-label="CATIA"><CatiaMark size={18} /></TaskButton>
        <Tray>
          <Weather>
            <svg width="16" height="16" viewBox="0 0 16 16"><path d="M4 11q-4 0-4-3 0-3 3-3 1-4 5-4 4 0 5 4 3 0 3 3t-4 3z" fill="#c6dff0" /><path d="M8 6q4 4 3 6-2 3-5 0-1-2 2-6z" fill="#3f9ade" /></svg>
            <span>25°C  Light rain</span>
          </Weather>
          <TrayIcon aria-label="Show hidden icons"><svg width="12" height="8" {...stroke}><path d="M1 7l5-5 5 5" /></svg></TrayIcon>
          <TrayIcon aria-label="Meet now"><svg width="12" height="14" {...stroke}><path d="M2 4.500h6v5H2zM8 6l2-1v4L8 8M3 2q2-2 5 0M3 12q2 2 5 0" /></svg></TrayIcon>
          <TrayIcon aria-label="Battery"><svg width="14" height="10" {...stroke}><path d="M1 2.500h10v5H1zM12 4v2" /><path d="M2 3h2v4H2z" fill="#222" /></svg></TrayIcon>
          <TrayIcon aria-label="Network"><svg width="14" height="14" {...stroke}><circle cx="7" cy="7" r="5.500" /><path d="M1.500 7h11M7 1.500v11M7 1.500q-5 5 0 11M7 1.500q5 5 0 11" /><circle cx="11" cy="11" r="2" fill="#fff" /></svg></TrayIcon>
          <TrayIcon aria-label="Volume"><svg width="14" height="12" {...stroke}><path d="M1 4h2l3-3v10L3 8H1zM8 4q1 2 0 4" /><path d="M10 3q2 3 0 6M12 1q3 5 0 10" stroke="#999" /></svg></TrayIcon>
          <TrayText $width={32}>ENG<br />IN</TrayText>
          <TrayText $width={54}>4:42 AM<br />9/29/2021</TrayText>
          <Notice aria-label="Notifications"><svg width="24" height="22" viewBox="0 0 24 22"><path d="M3 3h14v11H9l-2 3v-3H3z" fill="#111" /><path d="M6 6h8M6 8.500h8M6 11h8" stroke="#eee" /><circle cx="17" cy="15" r="6" fill="#e3dfdb" stroke="#555" /><text x="14" y="18" fontSize="9" fill="#111">1</text></svg></Notice>
        </Tray>
      </TaskBar>
    </App>
  );
}
